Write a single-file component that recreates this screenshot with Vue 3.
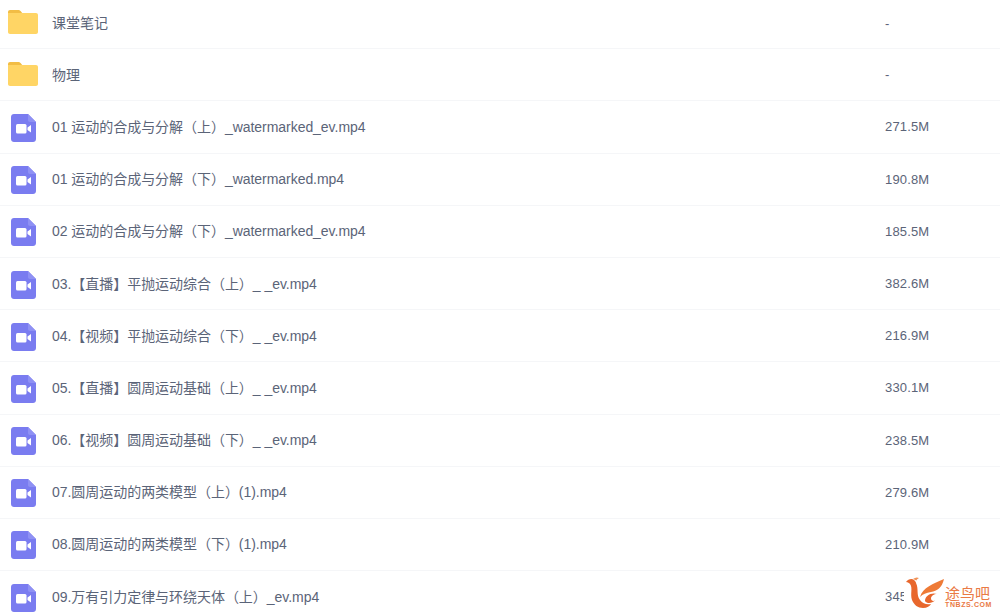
<template>
    <div class="file-list">
        <div class="row" v-for="(item, index) in files" :key="index">
            <span class="icon-box" :class="{ video: !item.folder }">
                <svg v-if="item.folder" width="30" height="24" viewBox="0 0 30 24">
                    <path d="M2 0h8c1.200 0 2 .4 2.800 1.300L15 4H0V2C0 .9.900 0 2 0z" fill="#f2bd45" />
                    <path d="M0 3h28c1.100 0 2 .9 2 2v17c0 1.100-.9 2-2 2H2c-1.100 0-2-.9-2-2z" fill="#ffd565" />
                </svg>
                <svg v-else width="25" height="28" viewBox="0 0 25 28">
                    <path d="M3 0h14l8 8v17c0 1.700-1.300 3-3 3H3c-1.700 0-3-1.300-3-3V3c0-1.700 1.300-3 3-3z" fill="#7a7cf0" />
                    <path d="M17 0l8 8h-6c-1.100 0-2-.9-2-2z" fill="#8f91f4" />
                    <rect x="5" y="10" width="10.500" height="9.500" rx="1.500" fill="#fff" />
                    <path d="M16.500 13.500l3.500-2.500v7.500l-3.500-2.500z" fill="#fff" />
                </svg>
            </span>
            <span class="name">{{ item.name }}</span>
            <span class="size">{{ item.size }}</span>
        </div>
        <div class="watermark">
            <svg width="40" height="34" viewBox="0 0 40 34">
                <path d="M0 5c2-3 6-4 8-2 1 1 2 2 2 3 3 6 0 12 4 17 3 4 7 5 11 4-1 2-4 4-8 4-5 0-9-3-11-8C4 17 7 11 4 7 3 6 2 5 0 5z" fill="#e8672c" />
                <path d="M7 2c2-1.500 4-2 6-1-1 .5-2 1-2.500 2.500z" fill="#f0935a" />
                <path d="M14 20C17 10 27 7 38 2c-2 9-7 12-13 13-5 1-8 2-11 5z" fill="#ee7a36" />
                <path d="M19 24c0-5 6-9 12-7-3 0-6 2-6 4.500 0 2 2 3 4 2-3 3-8 3.500-10 .5z" fill="#e8672c" />
            </svg>
            <div class="brand">
                <span class="brand-cn">途鸟吧</span>
                <span class="brand-en">TNBZS.COM</span>
            </div>
        </div>
    </div>
</template>

<script setup>
const files = [
    { name: '课堂笔记', size: '-', folder: true },
    { name: '物理', size: '-', folder: true },
    { name: '01 运动的合成与分解（上）_watermarked_ev.mp4', size: '271.5M' },
    { name: '01 运动的合成与分解（下）_watermarked.mp4', size: '190.8M' },
    { name: '02 运动的合成与分解（下）_watermarked_ev.mp4', size: '185.5M' },
    { name: '03.【直播】平抛运动综合（上）_ _ev.mp4', size: '382.6M' },
    { name: '04.【视频】平抛运动综合（下）_ _ev.mp4', size: '216.9M' },
    { name: '05.【直播】圆周运动基础（上）_ _ev.mp4', size: '330.1M' },
    { name: '06.【视频】圆周运动基础（下）_ _ev.mp4', size: '238.5M' },
    { name: '07.圆周运动的两类模型（上）(1).mp4', size: '279.6M' },
    { name: '08.圆周运动的两类模型（下）(1).mp4', size: '210.9M' },
    { name: '09.万有引力定律与环绕天体（上）_ev.mp4', size: '345.2M' },
];
</script>

<style scoped>
.file-list {
    position: relative;
    height: 612px;
    overflow: hidden;
    background: #fff;
    font-family: "Liberation Sans", "Noto Sans CJK SC", sans-serif;
    font-size: 14px;
    color: #5b6478;
}

.row {
    display: flex;
    align-items: center;
    height: 52.2px;
    box-sizing: border-box;
    padding-bottom: 2px;
    border-bottom: 1px solid #f5f6f8;
}

.row:first-child {
    height: 49.2px;
    padding-bottom: 4px;
}

.icon-box {
    flex: none;
    width: 30px;
    margin: 0 14px 0 8px;
    display: flex;
    justify-content: center;
}

.icon-box.video {
    margin-top: 4px;
}

.name {
    flex: 1;
    white-space: nowrap;
    letter-spacing: -0.04px;
}

.size {
    width: 115px;
    flex: none;
    padding-top: 2px;
    font-size: 13px;
    letter-spacing: 0.15px;
}

.watermark {
    position: absolute;
    left: 904px;
    top: 577px;
    width: 96px;
    height: 35px;
    padding-left: 2px;
    box-sizing: border-box;
    display: flex;
    align-items: flex-start;
    background: #fff;
}

.brand {
    display: flex;
    flex-direction: column;
    margin-top: 9px;
    margin-left: -1px;
    line-height: 1;
    color: #ea7a45;
}

.brand-cn {
    font-size: 15px;
}

.brand-en {
    font-size: 7px;
    font-weight: bold;
    letter-spacing: 0.6px;
}
</style>

<style>
body {
    margin: 0;
    background: #fff;
}
</style>
